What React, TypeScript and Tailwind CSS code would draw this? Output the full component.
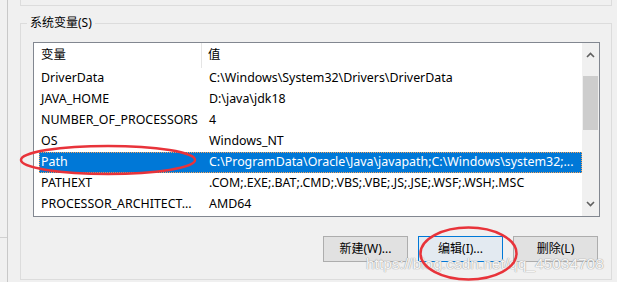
import React from "react";

const rows: [string, string][] = [
  ["DriverData", "C:\\Windows\\System32\\Drivers\\DriverData"],
  ["JAVA_HOME", "D:\\java\\jdk18"],
  ["NUMBER_OF_PROCESSORS", "4"],
  ["OS", "Windows_NT"],
  ["Path", "C:\\ProgramData\\Oracle\\Java\\javapath;C:\\Windows\\system32;..."],
  ["PATHEXT", ".COM;.EXE;.BAT;.CMD;.VBS;.VBE;.JS;.JSE;.WSF;.WSH;.MSC"],
  ["PROCESSOR_ARCHITECT...", "AMD64"],
];

const font = { fontFamily: '"Noto Sans", "Noto Sans CJK SC", sans-serif' };

function Btn({ label, primary }: { label: string; primary?: boolean }) {
  return (
    <div
      className={
        "w-[85px] h-[26px] flex items-center justify-center text-[12px] text-black border " +
        (primary ? "border-[#0078d7] bg-[#e3eaf1]" : "border-[#adadad] bg-[#e1e1e1]")
      }
    >
      {label}
    </div>
  );
}

export default function App() {
  return (
    <div
      className="relative w-[617px] h-[282px] bg-[#f0f0f0] overflow-hidden flex text-black"
      style={font}
    >
      {/* left strip */}
      <div className="w-[8px] h-full border-r border-[#c8c8c8] flex flex-col">
        <div className="h-[238px] border-b border-[#d0d0d0]" />
      </div>

      {/* main */}
      <div className="flex flex-col pl-[12px]">
        {/* top groupbox bottom edge */}
        <div className="w-[592px] h-[6px] border-l border-r border-b border-[#dcdcdc]" />

        {/* system variables groupbox */}
        <div className="relative mt-[17px] w-[592px] h-[257px] border border-[#dcdcdc] flex flex-col pl-[12px] pr-[12px]">
          <div className="absolute left-[6px] top-[-9px] bg-[#f0f0f0] px-[3px] text-[12px] leading-[16px]">
            系统变量(S)
          </div>

          {/* list box */}
          <div className="mt-[18px] w-[567px] h-[175px] border border-[#828790] bg-white flex text-[12.4px]">
            <div className="flex-1 flex flex-col">
              {/* header */}
              <div className="h-[25px] flex items-center">
                <div className="w-[168px] h-full pl-[7px] flex items-center border-r border-[#e5e5e5]">变量</div>
                <div className="pl-[6px]">值</div>
              </div>
              {rows.map(([k, v]) => {
                const sel = k === "Path";
                return (
                  <div
                    key={k}
                    className={
                      "h-[21px] flex items-center whitespace-nowrap " +
                      (sel
                        ? "bg-[#0078d7] text-white outline-1 outline-dotted outline-offset-[-1px] outline-[#f7a45a] ml-[5px]"
                        : "")
                    }
                  >
                    <div className={(sel ? "w-[163px] pl-[2px]" : "w-[168px] pl-[7px]")}>{k}</div>
                    <div className="pl-[7px]">{v}</div>
                  </div>
                );
              })}
            </div>
            {/* scrollbar */}
            <div className="w-[17px] h-full bg-[#f0f0f0] flex flex-col items-center">
              <div className="h-[24px] flex items-center justify-center">
                <svg width="9" height="6" viewBox="0 0 9 6">
                  <path d="M1 5 L4.5 1.5 L8 5" stroke="#606060" strokeWidth="1.6" fill="none" />
                </svg>
              </div>
              <div className="mt-[9px] w-[15px] h-[54px] bg-[#cdcdcd]" />
              <div className="flex-1" />
              <div className="h-[24px] flex items-center justify-center">
                <svg width="9" height="6" viewBox="0 0 9 6">
                  <path d="M1 1 L4.5 4.5 L8 1" stroke="#606060" strokeWidth="1.6" fill="none" />
                </svg>
              </div>
            </div>
          </div>

          {/* buttons */}
          <div className="mt-[19px] flex justify-end gap-[10px] pr-[1px]">
            <Btn label="新建(W)..." />
            <Btn label="编辑(I)..." primary />
            <Btn label="删除(L)" />
          </div>
        </div>
      </div>

      {/* watermark */}
      <div
        className="absolute left-[366px] top-[254px] text-[15.5px] leading-[20px] text-white/90"
        style={{
          fontFamily: '"Liberation Sans", sans-serif',
          textShadow: "0 0 1px #9a9a9a, 0 0 1px #9a9a9a",
        }}
      >
        https://blog.csdn.net/qq_45034708
      </div>

      {/* red annotations */}
      <svg className="absolute left-0 top-0 pointer-events-none" width="617" height="282">
        <ellipse cx="108" cy="160" rx="87" ry="14" stroke="#e8333a" strokeWidth="2.5" fill="none" />
        <ellipse cx="468.5" cy="253.5" rx="48" ry="26" stroke="#e8333a" strokeWidth="2.5" fill="none" />
      </svg>
    </div>
  );
}
